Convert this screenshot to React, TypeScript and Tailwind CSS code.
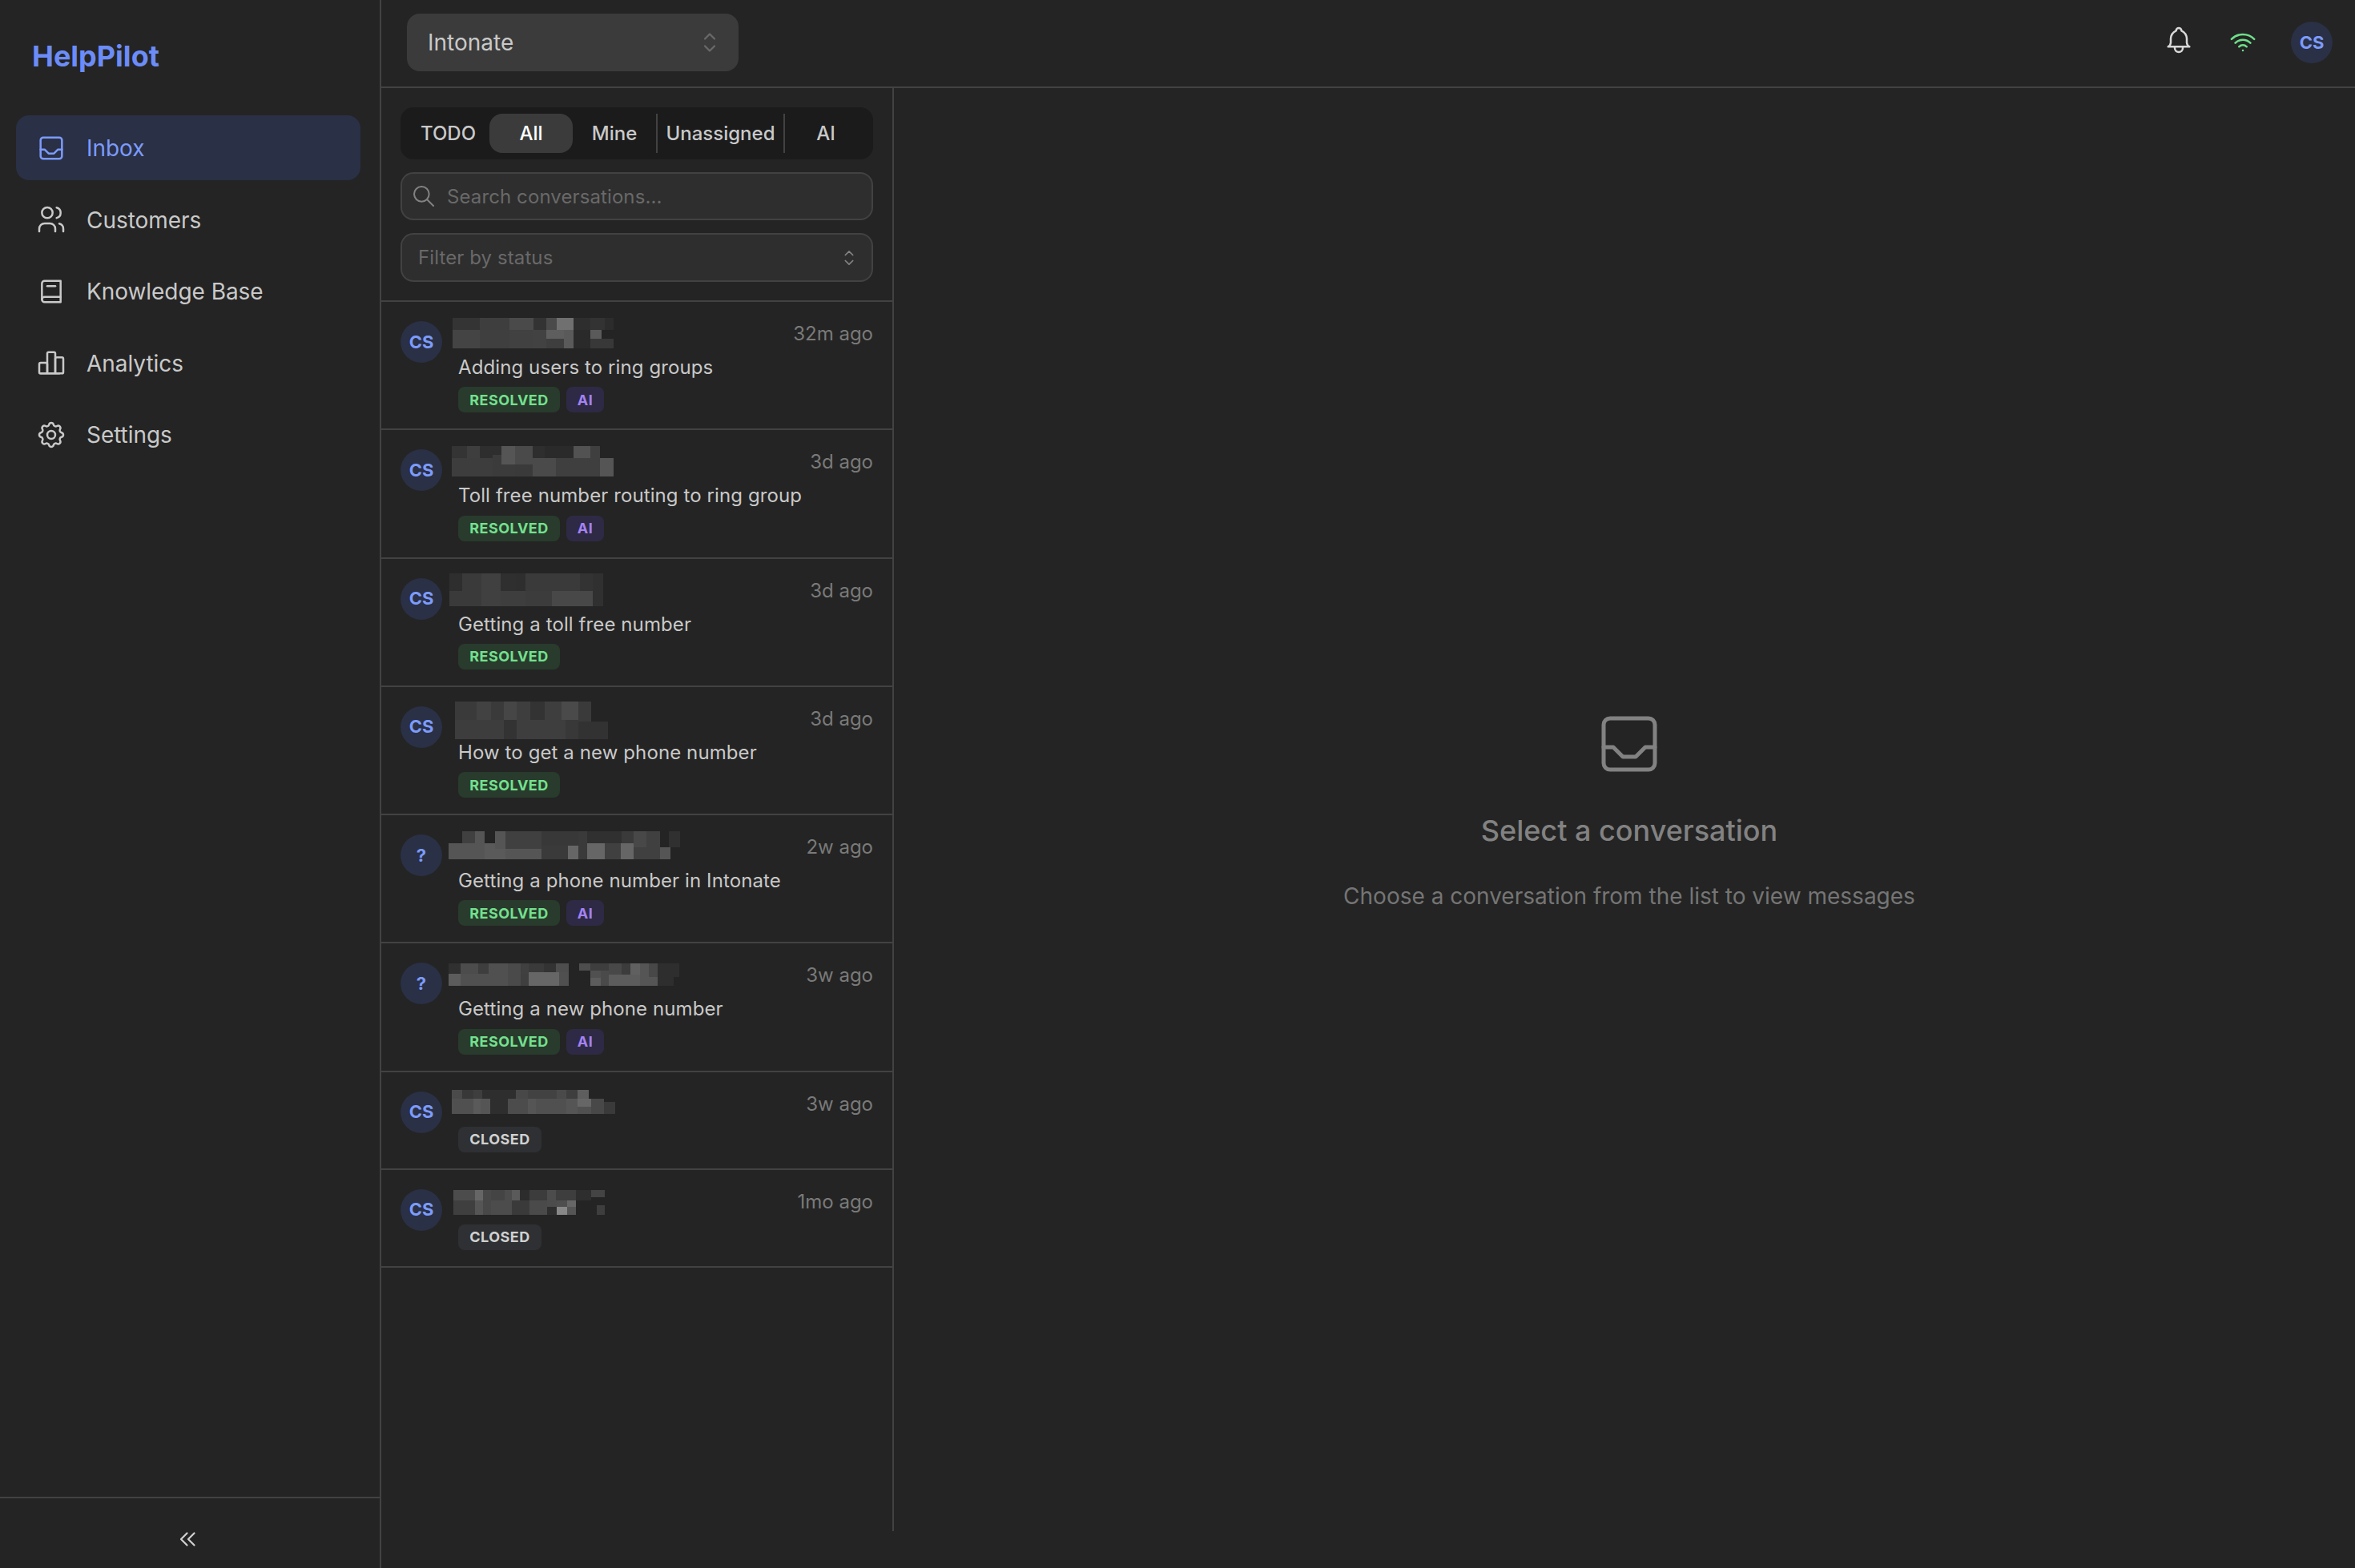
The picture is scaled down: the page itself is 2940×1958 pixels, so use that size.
import React from "react";
import {
  TbInbox,
  TbUsers,
  TbBook2,
  TbChartBar,
  TbSettings,
  TbBell,
  TbWifi,
  TbSelector,
  TbSearch,
  TbChevronsLeft,
} from "react-icons/tb";

type R = [number, number, number, number, string];
type M = { x0: number; y0: number; x1: number; y1: number; left: number; top: number; w: number; h: number; rects: R[] };

const row = (y0: number, y1: number, cells: [number, number, string][]): R[] =>
  cells.map(([a, b, c]) => [a, y0, b - a, y1 - y0, c]);

const mosaics: M[] = [
  {
    x0: 208, y0: 85, x1: 700, y1: 197, left: -7, top: 0, w: 201, h: 38,
    rects: [
      ...row(85, 128, [[208, 290, "#343434"], [290, 382, "#3e3e3e"], [382, 456, "#4a4a4a"], [456, 495, "#333333"], [495, 525, "#4a4a4a"], [525, 578, "#707070"], [578, 630, "#2e2e2e"], [630, 672, "#333333"], [672, 700, "#2c2c2c"]]),
      ...row(128, 197, [[208, 290, "#444444"], [290, 382, "#3f3f3f"], [382, 456, "#414141"], [456, 495, "#424242"], [495, 548, "#3e3e3e"], [548, 578, "#5a5a5a"], [578, 630, "#2a2a2a"], [630, 700, "#383838"]]),
      ...row(128, 163, [[495, 548, "#5e5e5e"], [630, 664, "#5a5a5a"], [664, 700, "#242424"]]),
    ],
  },
  {
    x0: 206, y0: 565, x1: 700, y1: 677, left: -8, top: 0, w: 202, h: 38,
    rects: [
      ...row(565, 610, [[206, 252, "#343434"], [252, 292, "#3e3e3e"], [292, 358, "#2e2e2e"], [452, 490, "#2e2e2e"], [490, 578, "#2a2a2a"], [578, 630, "#525252"], [630, 659, "#3f3f3f"]]),
      ...row(610, 677, [[206, 331, "#3d3d3d"], [331, 398, "#3b3b3b"], [398, 452, "#3a3a3a"], [452, 524, "#4a4a4a"], [524, 659, "#3f3f3f"], [659, 700, "#555555"]]),
      ...row(565, 632, [[358, 398, "#555555"], [398, 452, "#4a4a4a"]]),
      ...row(597, 632, [[331, 358, "#3b3b3b"]]),
    ],
  },
  {
    x0: 198, y0: 1038, x1: 668, y1: 1160, left: -11, top: -2, w: 192, h: 41,
    rects: [
      ...row(1038, 1103, [[198, 238, "#2e2e2e"], [238, 295, "#3a3a3a"], [295, 355, "#404040"], [355, 400, "#2f2f2f"], [400, 430, "#2e2e2e"], [430, 598, "#3a3a3a"], [598, 637, "#333333"], [637, 668, "#303030"]]),
      ...row(1103, 1160, [[198, 295, "#3a3a3a"], [295, 355, "#404040"], [355, 430, "#3e3e3e"], [430, 512, "#3c3c3c"], [512, 637, "#484848"], [637, 668, "#303030"]]),
    ],
  },
  {
    x0: 36, y0: 21, x1: 609, y1: 162, left: -4, top: -2, w: 191, h: 47,
    rects: [
      ...row(21, 90, [[36, 117, "#3a3a3a"], [117, 172, "#424242"], [172, 219, "#3a3a3a"], [219, 267, "#464646"], [267, 319, "#3e3e3e"], [319, 372, "#333333"], [372, 435, "#3e3e3e"], [435, 498, "#4a4a4a"], [498, 546, "#3a3a3a"]]),
      ...row(90, 162, [[36, 219, "#3d3d3d"], [219, 267, "#333333"], [267, 450, "#3e3e3e"], [450, 498, "#383838"], [498, 546, "#3a3a3a"]]),
      ...row(96, 162, [[498, 609, "#323232"]]),
    ],
  },
  {
    x0: 12, y0: 15, x1: 880, y1: 120, left: -12, top: 0, w: 289, h: 35,
    rects: [
      ...row(15, 60, [[63, 111, "#404040"], [111, 147, "#555555"], [531, 660, "#303030"], [660, 705, "#3a3a3a"]]),
      ...row(15, 81, [[186, 225, "#555555"], [225, 360, "#404040"]]),
      ...row(15, 69, [[360, 498, "#383838"]]),
      ...row(15, 120, [[498, 531, "#3a3a3a"]]),
      ...row(15, 75, [[705, 753, "#484848"], [753, 804, "#404040"], [837, 880, "#303030"]]),
      ...row(60, 120, [[12, 147, "#555555"], [147, 186, "#5a5a5a"], [531, 597, "#666666"], [597, 657, "#404040"], [657, 705, "#666666"]]),
      ...row(81, 120, [[186, 225, "#5a5a5a"], [225, 360, "#555555"]]),
      ...row(69, 120, [[360, 459, "#3a3a3a"], [459, 498, "#666666"]]),
      ...row(75, 120, [[705, 804, "#404040"], [804, 843, "#555555"]]),
    ],
  },
  {
    x0: 15, y0: 27, x1: 880, y1: 111, left: -12, top: 5, w: 288, h: 28,
    rects: [
      ...row(27, 66, [[15, 60, "#303030"], [60, 126, "#4c4c4c"], [126, 165, "#3e3e3e"], [165, 237, "#505050"], [237, 285, "#4a4a4a"], [285, 315, "#404040"]]),
      ...row(27, 60, [[315, 372, "#3a3a3a"], [372, 417, "#333333"], [417, 465, "#4e4e4e"]]),
      ...row(27, 54, [[504, 546, "#4e4e4e"], [546, 615, "#3e3e3e"]]),
      ...row(27, 69, [[615, 663, "#484848"], [663, 696, "#3c3c3c"], [696, 732, "#606060"], [732, 765, "#555555"]]),
      ...row(27, 78, [[765, 798, "#484848"], [798, 880, "#2e2e2e"]]),
      ...row(66, 111, [[15, 60, "#5c5c5c"], [60, 237, "#505050"], [237, 285, "#4a4a4a"], [285, 315, "#3f3f3f"]]),
      ...row(60, 111, [[315, 429, "#666666"], [429, 465, "#505050"]]),
      ...row(54, 81, [[546, 585, "#505050"]]),
      ...row(54, 111, [[585, 615, "#4a4a4a"]]),
      ...row(81, 111, [[546, 585, "#5c5c5c"]]),
      ...row(69, 111, [[615, 732, "#5c5c5c"], [732, 765, "#555555"]]),
      ...row(78, 111, [[765, 798, "#555555"], [798, 858, "#2e2e2e"]]),
    ],
  },
  {
    x0: 206, y0: 946, x1: 706, y1: 1023, left: -8, top: 2, w: 204, h: 30,
    rects: [
      ...row(946, 975, [[206, 238, "#4a4a4a"], [238, 272, "#383838"], [272, 300, "#3e3e3e"], [300, 403, "#2e2e2e"], [403, 440, "#484848"], [440, 528, "#424242"], [528, 556, "#4a4a4a"], [556, 590, "#3e3e3e"], [590, 625, "#5e5e5e"]]),
      ...row(975, 1023, [[206, 272, "#505050"], [272, 295, "#5a5a5a"], [295, 323, "#555555"], [323, 378, "#2e2e2e"], [378, 440, "#4c4c4c"], [440, 463, "#555555"], [463, 556, "#505050"], [556, 590, "#555555"], [632, 671, "#484848"]]),
      ...row(975, 1000, [[590, 632, "#666666"]]),
      ...row(1000, 1023, [[590, 632, "#505050"]]),
      ...row(985, 1023, [[671, 706, "#3a3a3a"]]),
    ],
  },
  {
    x0: 211, y0: 1275, x1: 674, y1: 1356, left: -6, top: 5, w: 189, h: 31,
    rects: [
      ...row(1275, 1308, [[211, 277, "#4c4c4c"], [277, 302, "#666666"], [302, 326, "#484848"], [326, 367, "#444444"], [367, 391, "#4c4c4c"], [391, 415, "#5a5a5a"], [415, 444, "#2c2c2c"], [444, 497, "#3c3c3c"], [497, 524, "#4c4c4c"], [524, 585, "#3e3e3e"], [585, 632, "#2e2e2e"]]),
      ...row(1275, 1298, [[632, 674, "#444444"]]),
      ...row(1308, 1356, [[211, 277, "#3f3f3f"], [277, 302, "#555555"], [302, 326, "#484848"], [326, 391, "#4c4c4c"], [391, 444, "#3a3a3a"], [444, 497, "#4a4a4a"]]),
      ...row(1308, 1330, [[497, 528, "#4c4c4c"], [528, 558, "#4e4e4e"], [558, 585, "#666666"]]),
      ...row(1330, 1356, [[497, 528, "#2e2e2e"], [528, 558, "#888888"], [558, 585, "#555555"]]),
      ...row(1325, 1356, [[649, 674, "#3e3e3e"]]),
    ],
  },
];

const conversations = [
  { av: "CS", time: "32m ago", title: "Adding users to ring groups", status: "RESOLVED", ai: true },
  { av: "CS", time: "3d ago", title: "Toll free number routing to ring group", status: "RESOLVED", ai: true },
  { av: "CS", time: "3d ago", title: "Getting a toll free number", status: "RESOLVED", ai: false },
  { av: "CS", time: "3d ago", title: "How to get a new phone number", status: "RESOLVED", ai: false },
  { av: "?", time: "2w ago", title: "Getting a phone number in Intonate", status: "RESOLVED", ai: true },
  { av: "?", time: "3w ago", title: "Getting a new phone number", status: "RESOLVED", ai: true },
  { av: "CS", time: "3w ago", title: "", status: "CLOSED", ai: false },
  { av: "CS", time: "1mo ago", title: "", status: "CLOSED", ai: false },
];

function Mosaic({ m }: { m: M }) {
  return (
    <svg
      className="absolute"
      style={{ left: m.left, top: m.top }}
      width={m.w}
      height={m.h}
      viewBox={`${m.x0} ${m.y0} ${m.x1 - m.x0} ${m.y1 - m.y0}`}
      preserveAspectRatio="none"
      shapeRendering="crispEdges"
    >
      {m.rects.map((r, i) => (
        <rect key={i} x={r[0]} y={r[1]} width={r[2]} height={r[3]} fill={r[4]} />
      ))}
    </svg>
  );
}

function NavItem({ icon: Icon, label, active }: { icon: any; label: string; active?: boolean }) {
  return (
    <div
      className={
        active
          ? "flex h-[81px] items-center gap-[24px] rounded-[16px] bg-[#2a3045] pl-[24px] text-[#7c9bfb]"
          : "flex h-[81px] items-center gap-[24px] rounded-[16px] pl-[24px] text-[#c9c9c9]"
      }
    >
      <Icon size={40} strokeWidth={1.5} />
      <span className="mt-[1px] text-[28px] leading-[40px] tracking-[-0.05px]">{label}</span>
    </div>
  );
}

function Avatar({ text }: { text: string }) {
  return (
    <div className="flex h-[52px] w-[52px] shrink-0 items-center justify-center rounded-full bg-[#2a3045] text-[22px] font-bold text-[#7c9bfb]">
      {text}
    </div>
  );
}

function Row({ c, m }: { c: (typeof conversations)[number]; m: M }) {
  return (
    <div className="flex gap-[20px] border-b-2 border-[#424242] px-[24px] py-[20px]">
      <div className="pt-[4px]">
        <Avatar text={c.av} />
      </div>
      <div className="min-w-0 flex-1">
        <div className="relative flex h-[38px] items-start justify-end">
          <Mosaic m={m} />
          <span className="mt-[1px] text-[24px] leading-[38px] text-[#7a7a7a]">{c.time}</span>
        </div>
        {c.title && <div className="mt-[3px] h-[40.3px] text-[24px] leading-[41px] tracking-[0.1px] text-[#c9c9c9]">{c.title}</div>}
        <div className={c.title ? "mt-[5px] flex gap-[8px]" : "mt-[10px] flex gap-[8px]"}>
          {c.status === "RESOLVED" ? (
            <span className="flex h-[32px] w-[127px] items-center justify-center rounded-[8px] bg-[#283b2c] text-[18px] font-bold tracking-[0.5px] text-[#74e08e]">
              RESOLVED
            </span>
          ) : (
            <span className="flex h-[32px] w-[104px] items-center justify-center rounded-[8px] bg-[#2e3033] text-[18px] font-bold tracking-[0.5px] text-[#d0d0d0]">
              CLOSED
            </span>
          )}
          {c.ai && (
            <span className="flex h-[32px] w-[47px] items-center justify-center rounded-[8px] bg-[#2e2a45] text-[18px] font-bold tracking-[0.5px] text-[#a582f2]">
              AI
            </span>
          )}
        </div>
      </div>
    </div>
  );
}

export default function App() {
  return (
    <div className="flex h-[1958px] w-[2940px] overflow-hidden bg-[#242424] [font-family:Inter,sans-serif]">
      <aside className="flex w-[476px] shrink-0 flex-col border-r-2 border-[#424242]">
        <div className="flex h-[144px] items-start pl-[40px] pt-[48px]">
          <span className="text-[36px] font-bold leading-[44px] text-[#6c8cf8]">HelpPilot</span>
        </div>
        <nav className="flex flex-1 flex-col gap-[8.6px] pl-[20px] pr-[24px]">
          <NavItem icon={TbInbox} label="Inbox" active />
          <NavItem icon={TbUsers} label="Customers" />
          <NavItem icon={TbBook2} label="Knowledge Base" />
          <NavItem icon={TbChartBar} label="Analytics" />
          <NavItem icon={TbSettings} label="Settings" />
        </nav>
        <div className="flex h-[89px] justify-center border-t-2 border-[#424242] pr-[4px] pt-[33px] text-[#d0d0d0]">
          <TbChevronsLeft size={36} strokeWidth={1.5} />
        </div>
      </aside>

      <div className="flex min-w-0 flex-1 flex-col">
        <header className="flex h-[110px] shrink-0 items-center justify-between border-b-2 border-[#424242] pb-[2px] pl-[32px] pr-[28px]">
          <div className="flex h-[72px] w-[414px] items-center justify-between rounded-[16px] bg-[#3b3b3b] pl-[26px] pr-[18px]">
            <span className="text-[28px] text-[#c9c9c9]">Intonate</span>
            <TbSelector size={36} strokeWidth={1.5} className="text-[#696969]" />
          </div>
          <div className="flex items-center gap-[40px]">
            <TbBell size={40} strokeWidth={1.5} className="mb-[6px] text-[#d8d8d8]" />
            <TbWifi size={40} strokeWidth={1.5} className="text-[#6fe08a]" />
            <Avatar text="CS" />
          </div>
        </header>

        <div className="flex min-h-0 flex-1">
          <section className="h-[1802px] w-[640px] shrink-0 border-r-2 border-[#424242]">
            <div className="border-b-2 border-[#424242] px-[24px] pb-[23px] pt-[24px]">
              <div className="flex h-[65px] items-center rounded-[16px] bg-[#1b1b1b] px-[8px] text-[24px] font-medium text-[#c9c9c9]">
                <div className="flex h-[49px] w-[103px] items-center justify-center">TODO</div>
                <div className="flex h-[49px] w-[104px] items-center justify-center rounded-[16px] bg-[#3b3b3b] text-white">All</div>
                <div className="flex h-[49px] w-[104px] items-center justify-center">Mine</div>
                <div className="h-[49px] w-[2px] bg-[#424242]" />
                <div className="flex h-[49px] w-[157px] items-center justify-center">Unassigned</div>
                <div className="h-[49px] w-[2px] bg-[#424242]" />
                <div className="flex h-[49px] flex-1 items-center justify-center">AI</div>
              </div>
              <div className="mt-[16px] flex h-[60px] items-center gap-[13px] rounded-[16px] border-2 border-[#424242] bg-[#2e2e2e] pl-[11px]">
                <TbSearch size={32} strokeWidth={1.5} className="shrink-0 text-[#828282]" />
                <input
                  readOnly
                  placeholder="Search conversations..."
                  className="mt-[1px] w-full bg-transparent text-[24px] tracking-[0.1px] text-[#c9c9c9] outline-none placeholder:text-[#696969]"
                />
              </div>
              <div className="mt-[16px] flex h-[61px] items-center justify-between rounded-[16px] border-2 border-[#424242] bg-[#2e2e2e] pl-[20px] pr-[14px]">
                <span className="text-[24px] tracking-[0.1px] text-[#696969]">Filter by status</span>
                <TbSelector size={28} strokeWidth={1.5} className="text-[#828282]" />
              </div>
            </div>
            {conversations.map((c, i) => (
              <Row key={i} c={c} m={mosaics[i]} />
            ))}
          </section>

          <main className="flex flex-1 flex-col items-center pl-[12px] pt-[771px]">
            <TbInbox size={96} strokeWidth={1.25} className="text-[#828282]" />
            <h2 className="mt-[32px] text-[36px] font-medium leading-[56px] text-[#828282]">Select a conversation</h2>
            <p className="mt-[32px] text-[28px] leading-[44px] text-[#757575]">
              Choose a conversation from the list to view messages
            </p>
          </main>
        </div>
      </div>
    </div>
  );
}
